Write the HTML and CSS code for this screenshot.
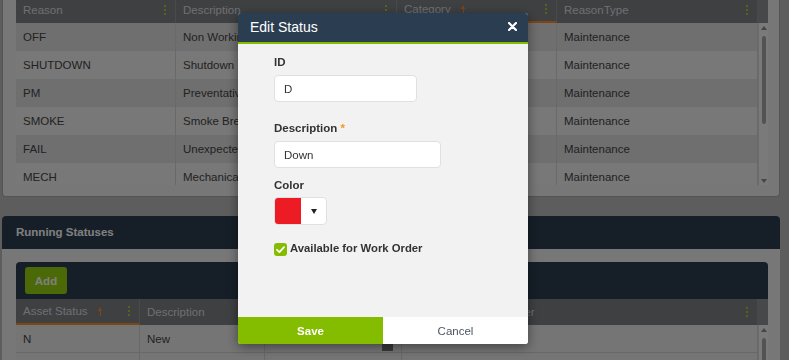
FILE: index.html
```html
<!DOCTYPE html>
<html lang="en">
  <head>
    <meta charset="UTF-8" />
    <meta name="viewport" content="width=device-width, initial-scale=1.0" />
    <title>Statuses</title>
    <link rel="stylesheet" href="styles.css">
  </head>
  <body>
    <div class="page">
      <div class="panel panel-reasons">
        <div class="grid grid-reasons">
          <div class="thead">
            <div class="th"><span>Reason</span><i class="dots"></i></div>
            <div class="th"><span>Description</span><i class="dots"></i></div>
            <div class="th sorted"><span>Category</span><i class="sort"></i><i class="dots"></i></div>
            <div class="th"><span>ReasonType</span><i class="dots"></i></div>
            <div class="th-filler"></div>
          </div>
          <div class="tbody tbody-reasons">
            <div class="rows">
              <div class="tr"><div class="td">OFF</div><div class="td">Non Working</div><div class="td">Planned</div><div class="td">Maintenance</div></div>
              <div class="tr"><div class="td">SHUTDOWN</div><div class="td">Shutdown</div><div class="td">Planned</div><div class="td">Maintenance</div></div>
              <div class="tr"><div class="td">PM</div><div class="td">Preventative Maintenance</div><div class="td">Planned</div><div class="td">Maintenance</div></div>
              <div class="tr"><div class="td">SMOKE</div><div class="td">Smoke Break</div><div class="td">Planned</div><div class="td">Maintenance</div></div>
              <div class="tr"><div class="td">FAIL</div><div class="td">Unexpected Failure</div><div class="td">Unplanned</div><div class="td">Maintenance</div></div>
              <div class="tr"><div class="td">MECH</div><div class="td">Mechanical</div><div class="td">Unplanned</div><div class="td">Maintenance</div></div>
            </div>
            <div class="vscroll">
              <i class="arrow-up"></i>
              <i class="thumb thumb-reasons"></i>
              <i class="arrow-down"></i>
            </div>
          </div>
        </div>
      </div>

      <div class="panel panel-running">
        <div class="panel-head">Running Statuses</div>
        <div class="panel-body">
          <div class="toolbar">
            <button class="btn-add">Add</button>
          </div>
          <div class="grid grid-status">
            <div class="thead">
              <div class="th sorted"><span>Asset Status</span><i class="sort"></i><i class="dots"></i></div>
              <div class="th"><span>Description</span><i class="dots"></i></div>
              <div class="th"><span>Color</span><i class="dots"></i></div>
              <div class="th"><span>Available for Work Order</span><i class="dots"></i></div>
              <div class="th-filler"></div>
            </div>
            <div class="tbody tbody-status">
              <div class="rows">
                <div class="tr"><div class="td">N</div><div class="td">New</div><div class="td td-color"><i class="swatch"></i></div><div class="td"></div></div>
                <div class="tr"><div class="td"></div><div class="td"></div><div class="td"></div><div class="td"></div></div>
              </div>
              <div class="vscroll">
                <i class="arrow-up"></i>
                <i class="thumb thumb-status"></i>
              </div>
            </div>
          </div>
        </div>
      </div>
    </div>

    <div class="overlay"></div>

    <div class="modal">
      <div class="modal-head">
        <span class="modal-title">Edit Status</span>
        <button class="close">
          <svg width="9" height="9" viewBox="0 0 9 9"><path d="M1 1 L8 8 M8 1 L1 8" stroke="#fff" stroke-width="2.2" stroke-linecap="round"/></svg>
        </button>
      </div>
      <div class="modal-body">
        <label class="label">ID</label>
        <input class="input input-id" type="text" value="D" />

        <label class="label label-desc">Description <span class="req">*</span></label>
        <input class="input input-desc" type="text" value="Down" />

        <label class="label label-color">Color</label>
        <div class="colorpick">
          <span class="colorpick-swatch"></span>
          <span class="colorpick-arrow"></span>
        </div>

        <div class="check-row">
          <span class="checkbox">
            <svg width="13" height="13" viewBox="0 0 13 13"><path d="M3 6.8 L5.4 9.1 L10 4.2" fill="none" stroke="#fff" stroke-width="1.8" stroke-linecap="round" stroke-linejoin="round"/></svg>
          </span>
          <span class="check-label">Available for Work Order</span>
        </div>
      </div>
      <div class="modal-foot">
        <button class="btn-save">Save</button>
        <button class="btn-cancel">Cancel</button>
      </div>
    </div>
  </body>
</html>
```

FILE: styles.css
```css
* {
  margin: 0;
  padding: 0;
  box-sizing: border-box;
  font-family: "Liberation Sans", Arial, sans-serif;
}

html,
body {
  height: 100%;
  overflow: hidden;
}

body {
  background: #bbbbbb;
  font-size: 11.5px;
  color: #454545;
}

.page {
  padding: 0 9px 0 2px;
}

/* panels */

.panel {
  background: #efefef;
  border: 1px solid #a9a9a9;
  border-radius: 4px;
}

.panel-reasons {
  margin-top: -3px;
  padding: 0 11px 11px 13px;
  border-top: none;
  border-radius: 0 0 4px 4px;
}

.panel-running {
  margin-top: 19px;
  border: none;
}

.panel-head {
  background: #2c3e50;
  height: 33px;
  line-height: 33px;
  padding-left: 14px;
  color: #fff;
  font-weight: bold;
  border-radius: 4px 4px 0 0;
}

.panel-body {
  padding: 13px 12px 0 14px;
}

.toolbar {
  background: #2c3e50;
  height: 37px;
  padding: 5px 9px;
  border-radius: 4px 4px 0 0;
}

.btn-add {
  width: 42px;
  height: 27px;
  border: none;
  border-radius: 3px;
  background: #97d30f;
  color: #fff;
  font-weight: bold;
  font-size: 11.5px;
}

/* grids */

.grid-reasons {
  --cols: 160px 221px 160px 201px;
}

.grid-status {
  --cols: 124px 125px 137px 356px;
}

.thead {
  display: grid;
  grid-template-columns: var(--cols) 10px;
  height: 26px;
  background: #7d8185;
}

.th {
  display: flex;
  align-items: center;
  padding: 0 9px 0 7px;
  color: #dadfe4;
  border-right: 1px solid #909498;
  white-space: nowrap;
  overflow: hidden;
}

.th.sorted {
  border-bottom: 2px solid #ff8a2a;
}

.th-filler {
  background: #8e9195;
}

.sort {
  position: relative;
  width: 5px;
  height: 9px;
  margin-left: 10px;
  margin-top: 1px;
}

.sort::before {
  content: "";
  position: absolute;
  left: 2px;
  top: 2px;
  width: 1.5px;
  height: 7px;
  background: #ff8a2a;
}

.sort::after {
  content: "";
  position: absolute;
  left: 0;
  top: 0;
  border-left: 2.75px solid transparent;
  border-right: 2.75px solid transparent;
  border-bottom: 4px solid #ff8a2a;
}

.dots {
  width: 2px;
  height: 2px;
  margin-left: auto;
  margin-top: -1px;
  border-radius: 1px;
  background: #b4e026;
  box-shadow: 0 -4px 0 #b4e026, 0 4px 0 #b4e026;
}

.tbody {
  display: flex;
  overflow: hidden;
}

.tbody-reasons {
  height: 162px;
}

.tbody-status {
  height: 80px;
}

.rows {
  flex: 1;
}

.tr {
  display: grid;
  grid-template-columns: var(--cols);
  height: 28px;
  background: #dedede;
}

.tr:nth-child(even) {
  background: #f0f0f0;
}

.tbody-status .tr {
  background: #ebebeb;
  border-bottom: 1px solid #d0d0d0;
}

.td {
  display: flex;
  align-items: center;
  padding: 0 7px;
  border-right: 1px solid #d2d2d2;
  white-space: nowrap;
  overflow: hidden;
}

.td-color {
  justify-content: flex-end;
  padding-right: 8px;
}

.swatch {
  width: 11px;
  height: 14px;
  margin-top: 10px;
  background: #757575;
}

.vscroll {
  width: 10px;
  display: flex;
  flex-direction: column;
  align-items: center;
  padding: 3px 0 2px;
  background: #f4f4f4;
  border-left: 1px solid #d6d6d6;
}

.arrow-up {
  border-left: 3.5px solid transparent;
  border-right: 3.5px solid transparent;
  border-bottom: 4px solid #8a8a8a;
}

.arrow-down {
  margin-top: auto;
  border-left: 3.5px solid transparent;
  border-right: 3.5px solid transparent;
  border-top: 4px solid #8a8a8a;
}

.thumb {
  width: 4px;
  margin-top: 6px;
  border-radius: 2px;
  background: #a6a6a6;
}

.thumb-reasons {
  height: 88px;
}

.thumb-status {
  height: 60px;
}

/* modal */

.overlay {
  position: fixed;
  inset: 0;
  background: rgba(0, 0, 0, 0.5);
}

.modal {
  position: fixed;
  left: 238px;
  top: 13px;
  width: 290px;
  height: 331px;
  display: flex;
  flex-direction: column;
  background: #f2f2f2;
  border-radius: 3px;
  overflow: hidden;
  box-shadow: 0 3px 12px rgba(0, 0, 0, 0.45);
}

.modal-head {
  display: flex;
  align-items: center;
  height: 31px;
  padding: 0 11px 2px 12px;
  background: #2b3e51;
  border-bottom: 2px solid #84bd00;
}

.modal-title {
  color: #fff;
  font-size: 14px;
}

.close {
  margin-left: auto;
  background: none;
  border: none;
  display: flex;
}

.modal-body {
  flex: 1;
  padding: 11px 36px 0;
}

.label {
  display: block;
  line-height: 14px;
  color: #333;
  font-weight: bold;
  font-size: 11.5px;
}

.label-desc {
  margin-top: 19px;
}

.label-color {
  margin-top: 10px;
}

.req {
  color: #f7941d;
}

.input {
  display: block;
  height: 27px;
  margin-top: 6px;
  padding: 0 9px;
  background: #fff;
  border: 1px solid #e0e0e0;
  border-radius: 4px;
  color: #333;
  font-size: 11.5px;
  outline: none;
}

.input-id {
  width: 143px;
}

.input-desc {
  width: 167px;
}

.colorpick {
  display: flex;
  width: 53px;
  height: 28px;
  margin-top: 5px;
  background: #fff;
  border: 1px solid #e0e0e0;
  border-radius: 4px;
  overflow: hidden;
}

.colorpick-swatch {
  width: 26px;
  background: #ed1c24;
}

.colorpick-arrow {
  flex: 1;
  display: flex;
  align-items: center;
  justify-content: center;
}

.colorpick-arrow::before {
  content: "";
  border-left: 3.5px solid transparent;
  border-right: 3.5px solid transparent;
  border-top: 5px solid #222;
}

.check-row {
  display: flex;
  align-items: center;
  gap: 3px;
  margin-top: 16px;
  height: 14px;
}

.checkbox {
  display: flex;
  width: 13px;
  height: 13px;
  margin-top: 2px;
  border-radius: 3px;
  background: #84bd00;
}

.check-label {
  color: #333;
  font-weight: bold;
  font-size: 11.3px;
}

.modal-foot {
  display: flex;
  height: 27px;
}

.modal-foot button {
  flex: 1;
  border: none;
  font-size: 11.5px;
}

.btn-save {
  background: #84bd00;
  color: #fff;
  font-weight: bold;
}

.btn-cancel {
  background: #fff;
  color: #4c5661;
}
```
